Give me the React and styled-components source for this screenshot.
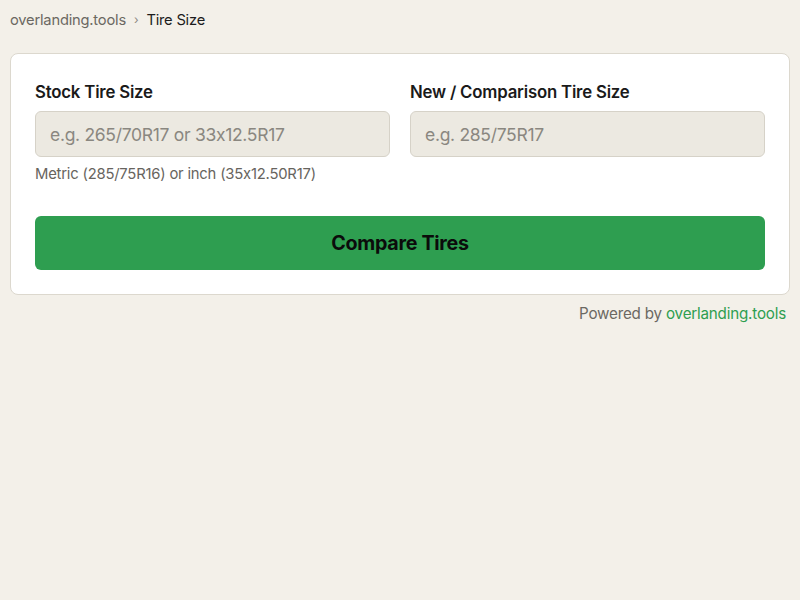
import React from 'react'
import styled, { createGlobalStyle } from 'styled-components'

const GlobalStyle = createGlobalStyle`
	body {
		margin: 0;
		background: #f3f0e9;
		font-family: Inter, "Open Sans", sans-serif;
		color: #1c1c1c;
	}
	* { box-sizing: border-box; }
`

const Page = styled.div`
	padding: 10px 10px 20px;
	min-height: 100vh;
`

const Crumbs = styled.nav`
	display: flex;
	align-items: center;
	gap: 8px;
	font-size: 14.7px;
	line-height: 20px;
	color: #6b6862;
	letter-spacing: -0.2px;
`

const CrumbSep = styled.span`
	font-size: 12px;
	color: #8d8a83;
`

const CrumbCurrent = styled.span`
	color: #1c1c1c;
`

const Card = styled.section`
	margin-top: 23px;
	background: #fff;
	border: 1px solid #dcd8ce;
	border-radius: 8px;
	padding: 24px;
`

const Fields = styled.div`
	display: grid;
	grid-template-columns: 1fr 1fr;
	gap: 20px;
`

const Field = styled.div`
	display: flex;
	flex-direction: column;
`

const Label = styled.label`
	font-size: 16.8px;
	font-weight: 600;
	line-height: 24px;
	padding-top: 2px;
	margin-bottom: 7px;
	letter-spacing: -0.2px;
	color: #1a1a1a;
`

const Input = styled.input`
	height: 46px;
	padding: 0 14px;
	background: #ece9e1;
	border: 1px solid #d6d2c8;
	border-radius: 6px;
	font-family: inherit;
	font-size: 17.5px;
	letter-spacing: -0.3px;
	color: #1c1c1c;
	outline: none;
	&::placeholder { color: #8a8780; }
`

const Hint = styled.p`
	margin: 7px 0 0;
	font-size: 14.8px;
	line-height: 20px;
	color: #67645e;
	letter-spacing: -0.2px;
`

const Button = styled.button`
	display: block;
	width: 100%;
	height: 54px;
	margin-top: 32px;
	background: #2e9e50;
	border: none;
	border-radius: 6px;
	font-family: inherit;
	font-size: 19.7px;
	font-weight: 700;
	letter-spacing: -0.3px;
	color: #0b0b0b;
	cursor: pointer;
`

const Footer = styled.p`
	margin: 10px 4px 0 0;
	text-align: right;
	font-size: 15.2px;
	line-height: 18px;
	color: #6b6862;
	letter-spacing: -0.2px;
	a { color: #2e9e50; text-decoration: none; }
`

export default function App() {
	return (
		<Page>
			<GlobalStyle />
			<Crumbs>
				<span>overlanding.tools</span>
				<CrumbSep>›</CrumbSep>
				<CrumbCurrent>Tire Size</CrumbCurrent>
			</Crumbs>
			<Card>
				<Fields>
					<Field>
						<Label>Stock Tire Size</Label>
						<Input placeholder="e.g. 265/70R17 or 33x12.5R17" />
						<Hint>Metric (285/75R16) or inch (35x12.50R17)</Hint>
					</Field>
					<Field>
						<Label>New / Comparison Tire Size</Label>
						<Input placeholder="e.g. 285/75R17" />
					</Field>
				</Fields>
				<Button>Compare Tires</Button>
			</Card>
			<Footer>
				Powered by <a href="#">overlanding.tools</a>
			</Footer>
		</Page>
	)
}
